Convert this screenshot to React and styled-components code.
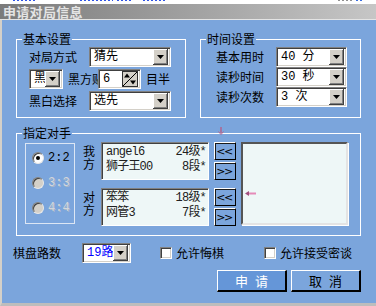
import React from "react";
import styled, { createGlobalStyle } from "styled-components";

const BLUE = "#7ba5dc";

const GlobalStyle = createGlobalStyle`
  html, body { margin: 0; padding: 0; }
  body {
    width: 376px;
    height: 306px;
    overflow: hidden;
    background: #fff;
    font-family: "Noto Sans CJK SC", "Liberation Sans", sans-serif;
    font-size: 12px;
    color: #000;
  }
  * { box-sizing: border-box; }
`;

const Window = styled.div`
	width: 376px;
	height: 306px;
	display: flex;
	flex-direction: column;
	background: #fff;
`;

const TopStrip = styled.div`
	height: 4px;
	display: flex;
	align-items: flex-start;
`;

const Dash = styled.span`
	height: 1px;
	width: ${p => p.w}px;
	margin-left: ${p => p.ml}px;
	background: repeating-linear-gradient(to right, ${p => p.c || "#2f54e8"} 0 2px, transparent 2px 4px);
`;

const TitleBar = styled.div`
	height: 16px;
	border-bottom: 1px solid #e4e4e4;
	background: linear-gradient(to right, #7b7b7b, #c6c6c6);
	color: #e4e4e4;
	font-weight: bold;
	font-size: 13px;
	line-height: 15px;
	padding-left: 3px;
	letter-spacing: 0.3px;
`;

const Body = styled.div`
	flex: 1;
	background: ${BLUE};
	border-left: 2px solid #d4d0c8;
	border-bottom: 3px solid #bdbdbd;
	padding: 19px 15px 0 11px;
	display: flex;
	flex-direction: column;
`;

const Groups = styled.div`
	padding-left: 3px;
	display: flex;
	flex-direction: column;
	gap: 15px;
`;

const TopRow = styled.div`
	display: flex;
	gap: 14px;
`;

const Group = styled.div`
	position: relative;
	width: ${p => p.w}px;
	height: ${p => p.h}px;
	border: 1px solid #fff;
	padding: ${p => p.pad};
	display: flex;
	flex-direction: ${p => p.dir || "column"};
	gap: ${p => p.gap || 0}px;
	align-items: flex-start;
`;

const Caption = styled.span`
	position: absolute;
	top: -9px;
	left: 5px;
	padding: 0 1px;
	background: ${BLUE};
	line-height: 16px;
	font-size: 12px;
`;

const Row = styled.div`
	display: flex;
	align-items: center;
	height: 20px;
`;

const Label = styled.div`
	width: ${p => p.w}px;
	line-height: 16px;
	white-space: nowrap;
	overflow: ${p => (p.clip ? "hidden" : "visible")};
	flex-shrink: 0;
`;

const Field = styled.div`
	width: ${p => p.w}px;
	height: 20px;
	flex-shrink: 0;
	display: flex;
	align-items: center;
	background: #fff;
	border: 1px solid;
	border-color: #808080 #fff #fff #808080;
	box-shadow: inset 1px 1px #404040, inset -1px -1px #d4d0c8;
	padding: 2px;
`;

const FieldText = styled.div`
	flex: 1;
	padding-left: 2px;
	line-height: 16px;
	white-space: nowrap;
	overflow: hidden;
	color: ${p => p.color || "#000"};
	font-family: "Liberation Mono", "Noto Sans CJK SC", monospace;
	font-size: 12px;
`;

const DropBtn = styled.div`
	width: 15px;
	height: 16px;
	flex-shrink: 0;
	background: #d4d0c8;
	box-shadow: inset -1px -1px #404040, inset 1px 1px #fff, inset -2px -2px #808080;
	display: flex;
	align-items: center;
	justify-content: center;
`;

const SpinBtn = styled.div`
	width: 16px;
	height: 16px;
	flex-shrink: 0;
	display: flex;
`;

const Select = ({ w, children, color }) => (
	<Field w={w}>
		<FieldText color={color}>{children}</FieldText>
		<DropBtn>
			<svg width="7" height="4" viewBox="0 0 7 4"><path d="M0 0h7L3.5 4z" fill="#000" /></svg>
		</DropBtn>
	</Field>
);

const Spinner = ({ w, children }) => (
	<Field w={w}>
		<FieldText>{children}</FieldText>
		<SpinBtn>
			<svg width="16" height="16" viewBox="0 0 16 16">
				<rect x="0.5" y="0.5" width="15" height="15" fill="#d4d0c8" stroke="#303030" />
				<path d="M1 15L15 1" stroke="#000" strokeWidth="1" />
				<path d="M5 2.5L8 6.5H2z" fill="#000" />
				<path d="M11 13.5L8 9.5h6z" fill="#000" />
			</svg>
		</SpinBtn>
	</Field>
);

const Gap = styled.span`
	display: inline-block;
	width: ${p => p.w}px;
	flex-shrink: 0;
`;

const RadioBox = styled.div`
	margin-top: 1px;
	width: 50px;
	height: 81px;
	flex-shrink: 0;
	border: 1px solid #dce6f4;
	padding: 7px 0 0 6px;
	display: flex;
	flex-direction: column;
	gap: 11px;
`;

const RadioRow = styled.div`
	display: flex;
	align-items: center;
	gap: 4px;
	height: 14px;
	font-family: "Liberation Mono", monospace;
	font-size: 12px;
	color: ${p => (p.disabled ? "#d2d6dc" : "#000")};
	text-shadow: ${p => (p.disabled ? "1px 1px #a9b6c8" : "none")};
`;

const RadioDot = styled.span`
	width: 12px;
	height: 12px;
	border-radius: 50%;
	background: ${p => (p.disabled ? "#d4d0c8" : "#fff")};
	border: 1px solid;
	border-color: #808080 #e8e8e8 #e8e8e8 #808080;
	box-shadow: inset 1px 1px #404040;
	display: flex;
	align-items: center;
	justify-content: center;
	&::after {
		content: "";
		width: 4px;
		height: 4px;
		border-radius: 50%;
		background: #000;
		display: ${p => (p.checked ? "block" : "none")};
	}
`;

const OppGrid = styled.div`
	margin-left: 8px;
	display: grid;
	grid-template-columns: 13px 108px 22px;
	grid-auto-rows: 38px;
	column-gap: 5px;
	row-gap: 8px;
`;

const SideLabel = styled.div`
	width: 13px;
	padding-top: 2px;
	line-height: 13px;
	font-size: 12px;
`;

const PlayerBox = styled.div`
	background: #eef7f7;
	border: 1px solid;
	border-color: #808080 #fff #fff #808080;
	box-shadow: inset 1px 1px #404040;
	padding: 2px 2px 0 4px;
	font-family: "Liberation Mono", "Noto Sans CJK SC", monospace;
	font-size: 12px;
	color: #202020;
`;

const PlayerLine = styled.div`
	display: flex;
	justify-content: space-between;
	line-height: 15px;
	white-space: nowrap;
	letter-spacing: -0.8px;
`;

const BtnPair = styled.div`
	position: relative;
	display: flex;
	flex-direction: column;
	gap: 2px;
`;

const ArrowBtn = styled.div`
	height: 18px;
	background: ${BLUE};
	border: 1px solid;
	border-color: #fff #000 #000 #fff;
	box-shadow: inset 0 1px #1a1a1a, inset 1px 0 #1a1a1a;
	display: flex;
	align-items: center;
	justify-content: center;
	font-family: "DejaVu Sans", sans-serif;
	font-size: 11px;
	letter-spacing: -1.5px;
	color: #000;
	padding-right: 2px;
`;

const Marker = styled.svg`
	position: absolute;
	left: ${p => p.l}px;
	top: ${p => p.t}px;
`;

const BigList = styled.div`
	position: relative;
	margin-left: 5px;
	width: 107px;
	height: 83px;
	flex-shrink: 0;
	background: #eef7f7;
	border: 2px solid;
	border-color: #555 #e4e4e4 #e4e4e4 #555;
	box-shadow: 1px 1px #fff;
`;

const BottomRow = styled.div`
	margin-top: 7px;
	display: flex;
	align-items: center;
	height: 20px;
`;

const CheckItem = styled.div`
	width: ${p => p.w}px;
	margin-left: ${p => p.ml || 0}px;
	display: flex;
	align-items: center;
	gap: 4px;
	white-space: nowrap;
	line-height: 16px;
	flex-shrink: 0;
`;

const CheckBox = styled.span`
	width: 12px;
	height: 12px;
	background: #fff;
	border: 1px solid;
	border-color: #808080 #fff #fff #808080;
	box-shadow: inset 1px 1px #404040, inset -1px -1px #d4d0c8;
`;

const ButtonRow = styled.div`
	margin-top: 7px;
	display: flex;
	justify-content: flex-end;
	gap: 4px;
`;

const DlgButton = styled.div`
	width: 70px;
	height: 22px;
	background: ${p => (p.primary ? "#6596d8" : BLUE)};
	color: ${p => (p.primary ? "#fff" : "#000")};
	border-style: solid;
	border-width: 1px 2px 2px 1px;
	border-color: #fff #000 #000 #fff;
	display: flex;
	align-items: center;
	justify-content: center;
	font-size: 13px;
	letter-spacing: 7px;
	padding-left: 7px;
	line-height: 17px;
`;

export default function App() {
	return (
		<Window>
			<GlobalStyle />
			<TopStrip>
				<Dash w={24} ml={13} />
				<Dash w={33} ml={43} />
				<Dash w={16} ml={4} />
				<Dash w={24} ml={10} />
				<Dash w={16} ml={171} c="#909090" />
				<Dash w={8} ml={2} c="#3a6ee0" />
			</TopStrip>
			<TitleBar>申请对局信息</TitleBar>
			<Body>
				<Groups>
					<TopRow>
						<Group w={170} h={79} pad="7px 0 0 12px" gap={2}>
							<Caption>基本设置</Caption>
							<Row>
								<Label w={60}>对局方式</Label>
								<Select w={82}>猜先</Select>
							</Row>
							<Row>
								<Select w={34}>黑白</Select>
								<Gap w={5} />
								<Label w={30} clip>黑方贴</Label>
								<Spinner w={43}>6</Spinner>
								<Gap w={5} />
								<Label w={26}>目半</Label>
							</Row>
							<Row>
								<Label w={60}>黑白选择</Label>
								<Select w={82}>选先</Select>
							</Row>
						</Group>
						<Group w={161} h={79} pad="7px 0 0 15px">
							<Caption>时间设置</Caption>
							<Row>
								<Label w={60}>基本用时</Label>
								<Select w={71}>40 分</Select>
							</Row>
							<Row>
								<Label w={60}>读秒时间</Label>
								<Select w={71}>30 秒</Select>
							</Row>
							<Row>
								<Label w={60}>读秒次数</Label>
								<Select w={71}>3 次</Select>
							</Row>
						</Group>
					</TopRow>
					<Group w={345} h={103} pad="8px 0 0 8px" dir="row">
						<Caption>指定对手</Caption>
						<RadioBox>
							<RadioRow><RadioDot checked />2:2</RadioRow>
							<RadioRow disabled><RadioDot disabled />3:3</RadioRow>
							<RadioRow disabled><RadioDot disabled />4:4</RadioRow>
						</RadioBox>
						<OppGrid>
							<SideLabel>我方</SideLabel>
							<PlayerBox>
								<PlayerLine><span>angel6</span><span>24级*</span></PlayerLine>
								<PlayerLine><span>狮子王00</span><span>8段*</span></PlayerLine>
							</PlayerBox>
							<BtnPair>
								<Marker l={4} t={-15} width="6" height="8" viewBox="0 0 6 8">
									<path d="M3 0v6" stroke="#b0658f" strokeWidth="1.5" />
									<path d="M0.5 4.5L3 7.5 5.5 4.5" stroke="#b0658f" strokeWidth="1" fill="none" />
								</Marker>
								<ArrowBtn>&lt;&lt;</ArrowBtn>
								<ArrowBtn>&gt;&gt;</ArrowBtn>
							</BtnPair>
							<SideLabel>对方</SideLabel>
							<PlayerBox>
								<PlayerLine><span>笨笨</span><span>18级*</span></PlayerLine>
								<PlayerLine><span>网管3</span><span>7段*</span></PlayerLine>
							</PlayerBox>
							<BtnPair>
								<ArrowBtn>&lt;&lt;</ArrowBtn>
								<ArrowBtn>&gt;&gt;</ArrowBtn>
							</BtnPair>
						</OppGrid>
						<BigList>
							<Marker l={2} t={47} width="11" height="5" viewBox="0 0 11 5">
								<path d="M2 2.5h9" stroke="#e58ab8" strokeWidth="2" />
								<path d="M0 2.5L4 0v5z" fill="#a0507e" />
							</Marker>
						</BigList>
					</Group>
				</Groups>
				<BottomRow>
					<Label w={69}>棋盘路数</Label>
					<Select w={49} color="#0000ff">19路</Select>
					<CheckItem ml={29} w={104}><CheckBox />允许悔棋</CheckItem>
					<CheckItem><CheckBox />允许接受密谈</CheckItem>
				</BottomRow>
				<ButtonRow>
					<DlgButton primary>申请</DlgButton>
					<DlgButton>取消</DlgButton>
				</ButtonRow>
			</Body>
		</Window>
	);
}
